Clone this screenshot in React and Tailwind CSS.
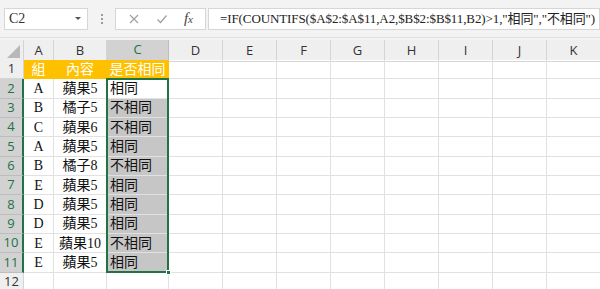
import React from 'react';

const COLS = ['A', 'B', 'C', 'D', 'E', 'F', 'G', 'H', 'I', 'J', 'K'];

const DATA = [
    ['A', '蘋果5', '相同'],
    ['B', '橘子5', '不相同'],
    ['C', '蘋果6', '不相同'],
    ['A', '蘋果5', '相同'],
    ['B', '橘子8', '不相同'],
    ['E', '蘋果5', '相同'],
    ['D', '蘋果5', '相同'],
    ['D', '蘋果5', '相同'],
    ['E', '蘋果10', '不相同'],
    ['E', '蘋果5', '相同'],
];

const SANS = { fontFamily: '"Open Sans", "Noto Sans", sans-serif' };
const CELL_FONT = 'font-["Liberation_Serif","Noto_Sans_CJK_TC",serif]';
const HEAD_FONT = 'font-["Open_Sans","Noto_Sans",sans-serif]';

const gridCols = 'grid grid-cols-[24px_30px_53px_62px_54px_54px_54px_54px_54px_54px_54px_54px]';

const Toolbar = () => (
    <div className="h-[38px] bg-[#f3f3f3] flex items-center border-b border-[#e0e0e0]">
        <div className="ml-[4px] w-[84px] h-[22px] bg-white border border-[#d6d6d6] flex items-center justify-between pl-[4px] pr-[6px]">
            <span className={`${CELL_FONT} text-[14px] text-[#333] leading-none`}>C2</span>
            <span className="w-0 h-0 border-l-[3px] border-r-[3px] border-t-[3px] border-l-transparent border-r-transparent border-t-[#555]" />
        </div>
        <div className="w-[27px] flex flex-col items-center gap-[2px]">
            <span className="w-[2px] h-[2px] bg-[#9a9a9a]" />
            <span className="w-[2px] h-[2px] bg-[#9a9a9a]" />
            <span className="w-[2px] h-[2px] bg-[#9a9a9a]" />
        </div>
        <div className="w-[91px] h-[22px] bg-white border border-[#d6d6d6] flex items-center justify-around px-[4px]">
            <svg width="12" height="12" viewBox="0 0 12 12"><path d="M2 2 L10 10 M10 2 L2 10" stroke="#9e9e9e" strokeWidth="1.1" fill="none" /></svg>
            <svg width="12" height="12" viewBox="0 0 12 12"><path d="M1.5 6.5 L4.5 9.5 L10.5 2.5" stroke="#9e9e9e" strokeWidth="1.2" fill="none" /></svg>
            <span className={`${CELL_FONT} italic text-[15px] text-[#444] leading-none`}>f<span className="text-[11px]">x</span></span>
        </div>
        <div className="ml-[2px] flex-1 h-[22px] bg-white border border-[#d6d6d6] flex items-center pl-[11px] overflow-hidden whitespace-nowrap">
            <span className={`${CELL_FONT} text-[13px] text-[#222] leading-none tracking-[-0.1px]`}>=IF(COUNTIFS($A$2:$A$11,A2,$B$2:$B$11,B2)&gt;1,"相同","不相同")</span>
        </div>
    </div>
);

const ColumnHeader = () => (
    <div className={`${gridCols} h-[20px] bg-[#efefef]`}>
        <div className="border-r border-b border-[#d4d4d4] flex items-end justify-end pr-[3px] pb-[3px]">
            <svg width="13" height="13" viewBox="0 0 13 13"><path d="M13 0 L13 13 L0 13 Z" fill="#b8b8b8" /></svg>
        </div>
        {COLS.map(c => (
            <div
                key={c}
                className={`flex items-center justify-center text-[13px] font-medium ${HEAD_FONT} border-r ${c === 'C' ? 'bg-[#d2d2d2] text-[#217346] border-b-2 border-b-[#217346] border-r-[#bdbdbd]' : 'text-[#333] border-b border-[#d4d4d4]'}`}
            >
                {c}
            </div>
        ))}
    </div>
);

const RowHead = ({ n, selected }) => (
    <div className={`h-[19.33px] flex items-center justify-center text-[13px] ${HEAD_FONT} border-b ${selected ? 'bg-[#d2d2d2] text-[#217346] border-r-2 border-r-[#217346] border-b-[#bdbdbd]' : 'bg-[#efefef] text-[#333] border-r border-[#d4d4d4]'}`}>
        {n}
    </div>
);

const Cell = ({ children, className = '' }) => (
    <div className={`h-[19.33px] border-r border-b border-[#e1e1e1] flex items-center text-[14px] ${CELL_FONT} whitespace-nowrap overflow-visible ${className}`}>
        {children}
    </div>
);

export default function App() {
    return (
        <div className="w-[600px] h-[289px] overflow-hidden bg-white" style={SANS}>
            <Toolbar />
            <div className="h-[2px] bg-[#f3f3f3]" />
            <ColumnHeader />
            <div className="relative">
                <div className={gridCols}>
                    <RowHead n={1} />
                    <Cell className="bg-[#ffc000] text-white justify-center border-[#ffc000]">組</Cell>
                    <Cell className="bg-[#ffc000] text-white justify-center border-[#ffc000]">內容</Cell>
                    <Cell className="bg-[#ffc000] text-white justify-center border-[#ffc000]">是否相同</Cell>
                    {COLS.slice(3).map(c => <Cell key={c} />)}

                    {DATA.map((row, i) => (
                        <React.Fragment key={i}>
                            <RowHead n={i + 2} selected />
                            <Cell className="justify-center text-[#111]">{row[0]}</Cell>
                            <Cell className="justify-center text-[#111]">{row[1]}</Cell>
                            <Cell className={`pl-[3px] text-[#111] ${i === 0 ? 'bg-white' : 'bg-[#c6c6c6] border-[#c6c6c6]'}`}>{row[2]}</Cell>
                            {COLS.slice(3).map(c => <Cell key={c} />)}
                        </React.Fragment>
                    ))}

                    <RowHead n={12} />
                    {COLS.map(c => <Cell key={c} />)}
                </div>
                {/* selection outline C2:C11 */}
                <div className="absolute left-[106px] top-[18px] w-[63px] h-[194.5px] border-2 border-[#217346] pointer-events-none" />
                <div className="absolute left-[166px] top-[209.5px] w-[5px] h-[5px] bg-[#217346] border border-white pointer-events-none" />
            </div>
        </div>
    );
}
